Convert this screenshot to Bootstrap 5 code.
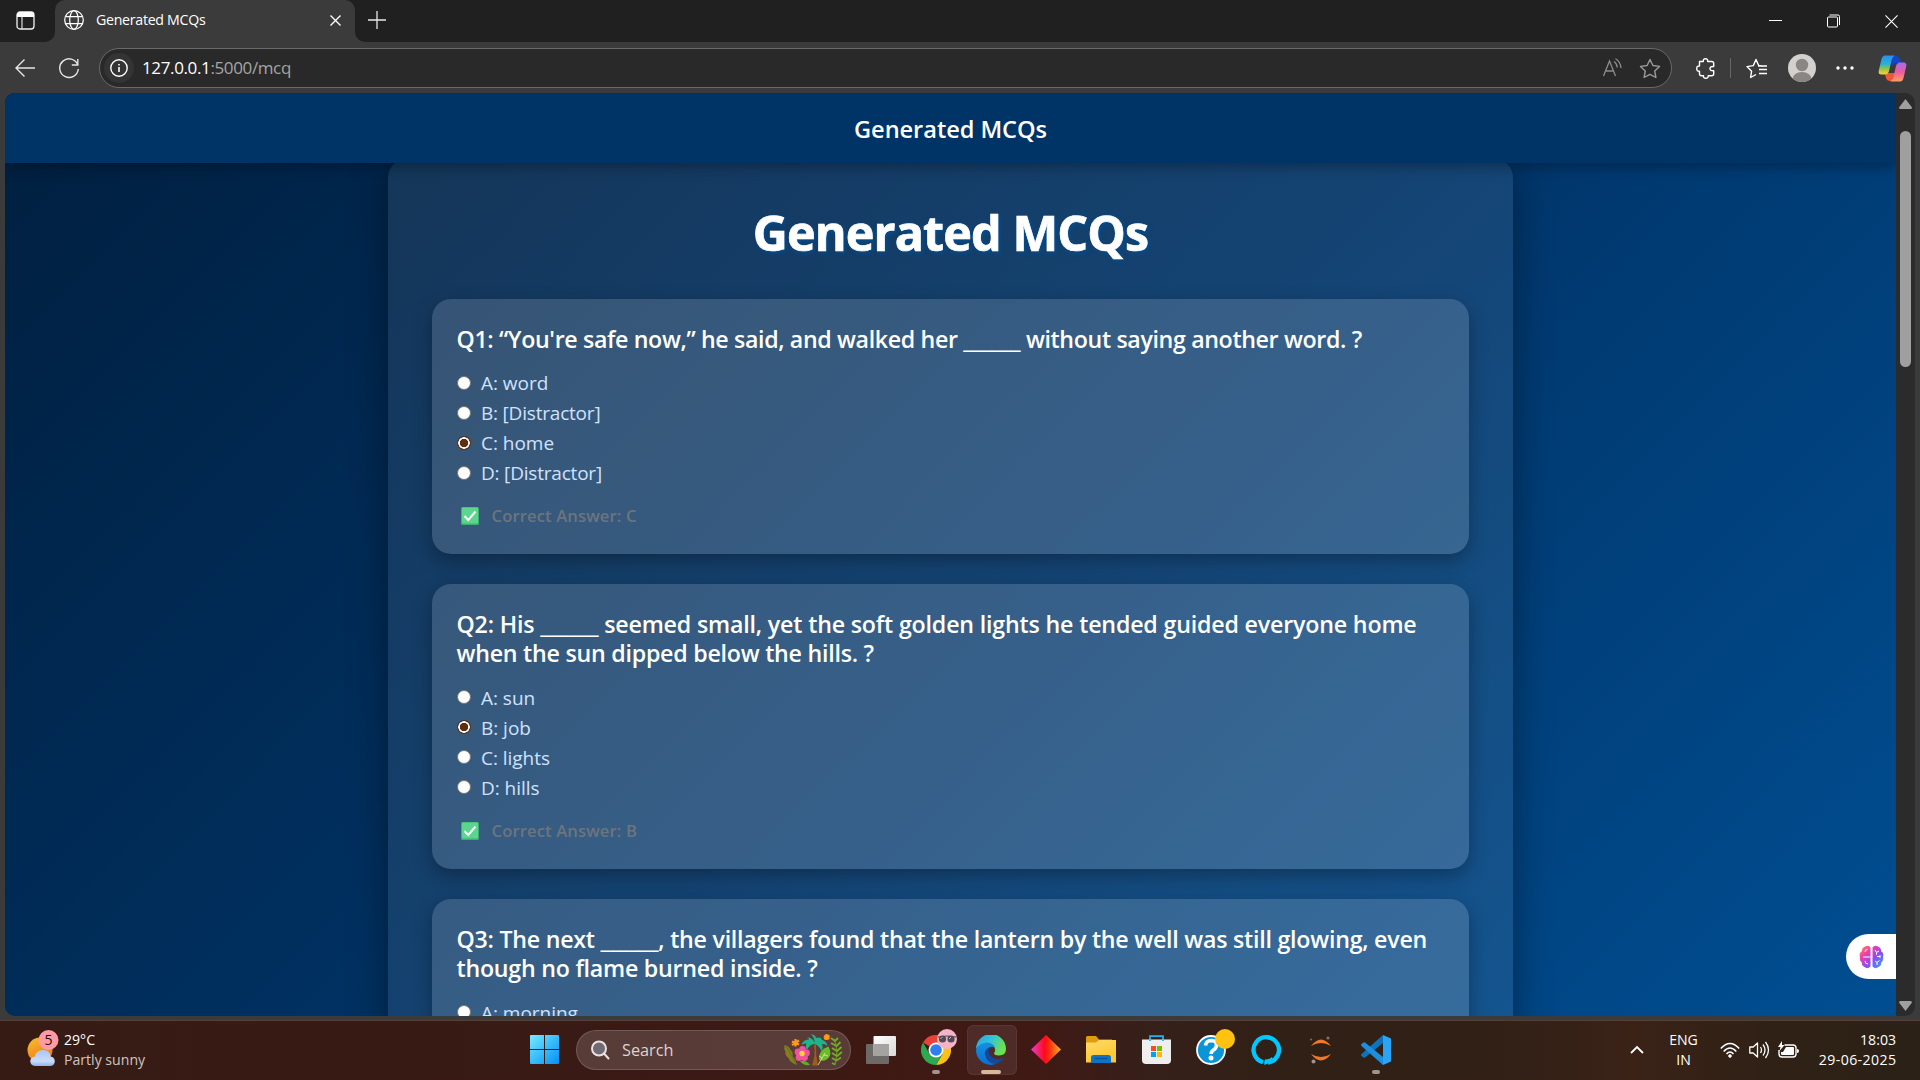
<!DOCTYPE html>
<html lang="en">
<head>
<meta charset="utf-8">
<meta name="viewport" content="width=device-width, initial-scale=1">
<title>Generated MCQs</title>
<link href="https://cdn.jsdelivr.net/npm/bootstrap@5.3.0/dist/css/bootstrap.min.css" rel="stylesheet">
<style>
html,body{height:100%;overflow:hidden}
body{font-family:"Open Sans","Noto Sans",sans-serif;background:#3b3b3b;color:#fff;width:1920px;height:1080px}
svg{display:block;flex:none}
.ln{white-space:nowrap;display:inline-block}
/* tab strip */
.tabstrip{height:42px;background:#202020}
.strip-left,.strip-rest{background:#3b3b3b}
.ws-btn{width:55px;height:42px;padding:0 0 2px 15.5px;background:#202020;border-bottom-right-radius:10px}
.tab-active{width:300px;height:42px;background:#3b3b3b;border-radius:10px 10px 0 0;padding:0 14px 2px 9px}
.strip-rest-in{height:42px;background:#202020;border-bottom-left-radius:10px;padding:0 22px 2px 13px}
.win-btns{gap:45px;padding-top:2px}
.t-tab{font-size:14.2px;line-height:20px;letter-spacing:-.29px}
.toolbar{height:51px;padding:6px 13px 5px 15px}
.omnibox{width:1573px;height:40px;border:1px solid #6a6a6a;border-radius:20px;background:#292929;margin-left:20px;padding:0 10px 0 4px}
.info-dot{width:30px;height:30px;border-radius:50%;background:#343434}
.vline{width:1px;height:20px;background:#666;margin:0 15px}
.t-url{font-size:17px;line-height:24px;letter-spacing:-.37px}
.t-url span{color:#a5a5a5}
/* page */
.viewport{height:923px;margin:0 5px;border-radius:10px;overflow:hidden;background:#2b2b2b}
.page{width:1891px;height:923px;background:linear-gradient(135deg,#001f3f,#003366,#004e92);overflow:hidden}
.topnav{height:70px;background:#003366;box-shadow:0 4px 12px rgba(0,0,0,.3);z-index:2;padding:2px 0 0}
.t-brand{font-size:23.6px;font-weight:600;line-height:32px;letter-spacing:-.05px}
.quiz{width:1125px;margin-top:-5px;padding:0 44px;border-radius:20px;background:rgba(255,255,255,.08);box-shadow:0 10px 38px rgba(0,0,0,.4)}
.t-title{font-size:48.5px;font-weight:700;line-height:60px;padding-top:44px;margin:0 0 37px;letter-spacing:-.9px;text-shadow:2px 2px 4px #004e92;-webkit-text-stroke:.7px #fff}
.q-card{background:rgba(255,255,255,.145);border:0;border-radius:19px;color:#fff;padding:26px 24.500px 0;margin-bottom:30px;box-shadow:0 7px 19px rgba(0,0,0,.3)}
.q-one{height:255px}.q-two{height:285px}
.t-q{font-size:23.2px;font-weight:600;line-height:29.4px;margin:0 0 14px;letter-spacing:-.235px}
.snug{letter-spacing:-.353px}.wide{letter-spacing:-.17px}
.t-opt{font-size:19px;line-height:30px;color:#cfe2ff;padding-left:10px;letter-spacing:-.03px}
.t-opt.tight{letter-spacing:-.2px}
.opt{height:30px}
.opt .form-check-input{width:14px;height:14px;margin:-1px 0 0 .5px;border:1px solid #767676;background:#fff;box-shadow:none;flex:none}
.opt .form-check-input:checked{border:1px solid #5f3010;background:radial-gradient(circle,#5c2e12 0 3.9px,#fff 4.5px 5.6px,#5c2e12 6.1px)}
.t-ans{font-size:16.6px;font-weight:600;line-height:24px;color:#6c757d;padding-left:13px;letter-spacing:.13px}
.ans{height:24px;margin-top:16px;padding-left:4px}
.scroller{width:19px;height:923px;padding:6px 0 5px}
.thumb{width:11px;height:236px;border-radius:6px;background:#9f9f9f;margin-top:22px}
.brain{right:0;top:841px;width:50px;height:45px;background:#fff;border-radius:23px 0 0 23px;padding-left:13px}
/* taskbar */
.frame-foot{height:4px;background:#3b3b3b}
.taskbar{height:60px;padding-bottom:2px;background:linear-gradient(90deg,#361b14 0,#391a14 28%,#3e1914 45%,#401914 54%,#36201a 60%,#302016 68%,#322016 78%,#3a2217 85%,#302116 92%,#2b2116 100%);border-top:1px solid #554039}
.weather{width:503px;padding-left:26px}
.t-sm{font-size:14.1px;line-height:20px}
.t-date{letter-spacing:.4px;margin-right:-.4px}
.dim{color:#cfc5c2}
.startslot{width:55px;margin-left:14px}
.search{width:275px;height:40px;border-radius:20px;background:rgba(255,255,255,.15);border:1px solid rgba(255,255,255,.16);margin:0 2.5px 0 4px;padding:0 7px 0 13px}
.t-search{font-size:16.3px;line-height:24px;color:#ddd3d0;margin-left:12px}
.slot{width:55px;height:57px;position:relative}
.slot.on::before{content:"";position:absolute;inset:4px 2px 3px 3px;border-radius:6px;background:rgba(255,255,255,.08);border:1px solid rgba(255,255,255,.06)}
.slot svg{position:relative}
.pip{position:absolute;top:49px;left:23.5px;width:8px;height:4px;border-radius:2px;background:#a0948f}
.on .pip{left:17.5px;width:20px;background:#d9b999}
.note{position:absolute;left:31px;top:8px;width:20px;height:20px;border-radius:50%;background:#ffc20e}
.note.pink{background:#f3b3c8;left:28px}
.tray{margin-left:auto;padding-right:24px}
.lang{margin:0 22px 0 25px}
</style>
</head>
<body>
<div class="d-flex flex-column h-100">

<header class="tabstrip d-flex">
  <div class="strip-left"><div class="ws-btn d-flex align-items-center">
    <svg width="19" height="19" viewBox="0 0 19 19"><rect x="1" y="1" width="17" height="17" rx="3" fill="none" stroke="#f2f2f2" stroke-width="1.3"/><path d="M1 6V3.5Q1 1 3.5 1H15.500Q18 1 18 3.500V6z" fill="#fff"/><path d="M6 6v12" stroke="#ddd" stroke-width="1.2"/></svg>
  </div></div>
  <div class="tab-active d-flex align-items-center">
    <svg width="20" height="20" viewBox="0 0 20 20" fill="none" stroke="#fff" stroke-width="1.25"><circle cx="10" cy="10" r="9.300"/><ellipse cx="10" cy="10" rx="4.300" ry="9.300"/><path d="M1.500 6.500h17M1.500 13.500h17"/></svg>
    <span class="ln t-tab ms-2 ps-1">Generated MCQs</span>
    <svg class="ms-auto" width="11" height="11" viewBox="0 0 11 11"><path d="M.5.5l10 10M10.500.5l-10 10" stroke="#fff" stroke-width="1.4"/></svg>
  </div>
  <div class="strip-rest flex-grow-1"><div class="strip-rest-in d-flex align-items-center">
    <svg width="18" height="18" viewBox="0 0 18 18"><path d="M9 0v18M0 9h18" stroke="#e8e8e8" stroke-width="1.3"/></svg>
    <div class="win-btns d-flex ms-auto align-items-center">
      <svg width="13" height="14" viewBox="0 0 13 14"><path d="M0 6.500h13" stroke="#fff"/></svg>
      <svg width="13" height="14" viewBox="0 0 13 14" fill="none" stroke="#fff"><rect x=".5" y="3" width="10" height="10" rx="1"/><path d="M2.500 1H11q1.500 0 1.500 1.500V11"/></svg>
      <svg width="13" height="13" viewBox="0 0 14 14"><path d="M.5.5l13 13M13.500.5l-13 13" stroke="#fff" stroke-width="1.2"/></svg>
    </div>
  </div></div>
</header>

<div class="toolbar d-flex align-items-center">
  <svg width="20" height="18" viewBox="0 0 20 18" fill="none" stroke="#e6e6e6" stroke-width="1.4"><path d="M9.500.5L1 9l8.500 8.500M1 9h19"/></svg>
  <svg class="ms-4" width="20" height="21" viewBox="0 0 20 21" fill="none" stroke="#e6e6e6" stroke-width="1.4"><path d="M18.800 7A9.300 9.300 0 1 0 19.300 11"/><path d="M18.800 1v6h-6"/></svg>
  <div class="omnibox d-flex align-items-center flex-shrink-0">
    <div class="info-dot d-flex align-items-center justify-content-center"><svg width="18" height="18" viewBox="0 0 18 18" fill="none" stroke="#fff" stroke-width="1.4"><circle cx="9" cy="9" r="8.200"/><path d="M9 8v5M9 5v1.500" stroke-width="1.600"/></svg></div>
    <span class="ln t-url ms-2">127.0.0.1<span>:5000/mcq</span></span>
    <svg class="ms-auto me-3" width="21" height="20" viewBox="0 0 21 20" fill="none" stroke="#8c8c8c" stroke-width="1.300"><path d="M1.500 18L7.500 3l6 15M3.500 13h8M12 3.500q3 2 3.300 6M13.500.7q5 3 5.500 9.300"/></svg>
    <svg width="22" height="21" viewBox="0 0 22 21" fill="none" stroke="#9a9a9a" stroke-width="1.400" stroke-linejoin="round"><path d="M11 1.500l2.900 6 6.600.9-4.800 4.600 1.200 6.500L11 16.400l-5.900 3.100 1.200-6.500L1.500 8.400l6.600-.9z"/></svg>
  </div>
  <div class="d-flex align-items-center flex-grow-1 ps-4">
    <svg width="19" height="21" viewBox="0 0 19 21" fill="none" stroke="#fff" stroke-width="1.400" stroke-linejoin="round"><path d="M3.500 3.500h3.800q-.3-2.800 2.200-2.800t2.200 2.800h4q2 0 2 2v3q-3.700-.3-3.700 2.100t3.700 2.100v3q0 2-2 2h-3.500q.3 2.600-2.400 2.600t-2.300-2.600H5.500q-2 0-2-2v-2.500q-2.800.2-2.800-2.600t2.800-2.600z"/></svg>
    <div class="vline"></div>
    <svg width="21" height="21" viewBox="0 0 21 21" fill="none" stroke="#fff" stroke-width="1.400" stroke-linejoin="round"><path d="M10 16.500L4.600 19.500l1-6.300L1 8.600l6.300-1L10 1.500l2.700 6 4.300.8M13 11.500h8M13 15.500h8M12 8h9"/></svg>
    <svg class="ms-auto" width="28" height="28" viewBox="0 0 28 28"><defs><clipPath id="av"><circle cx="14" cy="14" r="14"/></clipPath></defs><circle cx="14" cy="14" r="14" fill="#d3d1ce"/><g clip-path="url(#av)" fill="#8a8683"><circle cx="14" cy="11" r="6.200"/><ellipse cx="14" cy="25" rx="9.500" ry="7"/></g></svg>
    <svg class="ms-auto" width="18" height="4" viewBox="0 0 18 4" fill="#fff"><circle cx="2" cy="2" r="1.700"/><circle cx="9" cy="2" r="1.700"/><circle cx="16" cy="2" r="1.700"/></svg>
    <svg class="ms-4" width="29" height="27" viewBox="0 0 29 27"><defs><linearGradient id="c1" x2="0" y2="1"><stop stop-color="#2b8df0"/><stop offset=".45" stop-color="#27b3d0"/><stop offset=".75" stop-color="#a5c63b"/><stop offset="1" stop-color="#ffd02b"/></linearGradient><linearGradient id="c2" x2="0" y2="1"><stop stop-color="#a26bf0"/><stop offset=".5" stop-color="#ee5b9c"/><stop offset="1" stop-color="#ffa15c"/></linearGradient></defs><path d="M14 1h4q3 0 4 3l1 4h-5q-3 0-4 4z" fill="#1743c4"/><path d="M7 19l3-1h7l-3 8h-2q-3 0-4-3z" fill="#f1553a"/><path d="M7 .5h10q-2.500 1-3.500 5L11 16q-1 3.500-4 3.500H3.500Q0 19.500.7 16L3.500 4Q4.500.5 7 .5z" fill="url(#c1)"/><path d="M22 26.500H12q2.500-1 3.500-5L18 11q1-3.500 4-3.500h3.500q3.500 0 2.800 3.500L25.500 23q-1 3.500-3.500 3.500z" fill="url(#c2)"/></svg>
  </div>
</div>

<main class="viewport d-flex">
  <div class="page d-flex flex-column align-items-center position-relative">
    <nav class="topnav navbar w-100 justify-content-center flex-shrink-0"><span class="ln t-brand">Generated MCQs</span></nav>
    <section class="quiz flex-shrink-0">
      <h1 class="t-title text-center">Generated MCQs</h1>

      <div class="card q-card q-one">
        <h5 class="t-q"><span class="ln snug">Q1: “You're safe now,” he said, and walked her ______ without saying another word. ?</span></h5>
        <label class="opt d-flex align-items-center"><input class="form-check-input" type="radio" name="q1"><span class="ln t-opt">A: word</span></label>
        <label class="opt d-flex align-items-center"><input class="form-check-input" type="radio" name="q1"><span class="ln t-opt tight">B: [Distractor]</span></label>
        <label class="opt d-flex align-items-center"><input class="form-check-input" type="radio" name="q1" checked><span class="ln t-opt">C: home</span></label>
        <label class="opt d-flex align-items-center"><input class="form-check-input" type="radio" name="q1"><span class="ln t-opt tight">D: [Distractor]</span></label>
        <div class="ans d-flex align-items-center"><svg width="18" height="18" viewBox="0 0 18 18"><rect width="18" height="18" rx="1.500" fill="#3fae70"/><rect x="1" y=".5" width="16" height="16" rx="1" fill="#5ad68d"/><path d="M3.500 9l3.800 4 7.200-8.500" fill="none" stroke="#fff" stroke-width="2"/></svg><span class="ln t-ans">Correct Answer: C</span></div>
      </div>

      <div class="card q-card q-two">
        <h5 class="t-q"><span class="ln wide">Q2: His ______ seemed small, yet the soft golden lights he tended guided everyone home</span><br><span class="ln">when the sun dipped below the hills. ?</span></h5>
        <label class="opt d-flex align-items-center"><input class="form-check-input" type="radio" name="q2"><span class="ln t-opt">A: sun</span></label>
        <label class="opt d-flex align-items-center"><input class="form-check-input" type="radio" name="q2" checked><span class="ln t-opt">B: job</span></label>
        <label class="opt d-flex align-items-center"><input class="form-check-input" type="radio" name="q2"><span class="ln t-opt">C: lights</span></label>
        <label class="opt d-flex align-items-center"><input class="form-check-input" type="radio" name="q2"><span class="ln t-opt">D: hills</span></label>
        <div class="ans d-flex align-items-center"><svg width="18" height="18" viewBox="0 0 18 18"><rect width="18" height="18" rx="1.500" fill="#3fae70"/><rect x="1" y=".5" width="16" height="16" rx="1" fill="#5ad68d"/><path d="M3.500 9l3.800 4 7.200-8.500" fill="none" stroke="#fff" stroke-width="2"/></svg><span class="ln t-ans">Correct Answer: B</span></div>
      </div>

      <div class="card q-card q-two">
        <h5 class="t-q"><span class="ln">Q3: The next ______, the villagers found that the lantern by the well was still glowing, even</span><br><span class="ln">though no flame burned inside. ?</span></h5>
        <label class="opt d-flex align-items-center"><input class="form-check-input" type="radio" name="q3"><span class="ln t-opt">A: morning</span></label>
      </div>
    </section>
    <div class="brain position-absolute d-flex align-items-center">
      <svg width="25" height="24" viewBox="0 0 25 24"><defs><linearGradient id="br" x2="1" y2="1"><stop stop-color="#ff9a2e"/><stop offset=".3" stop-color="#ee3fae"/><stop offset=".6" stop-color="#8a4df0"/><stop offset="1" stop-color="#1fb0ff"/></linearGradient></defs><path d="M11.500 2.500v19q-3 3-6 .5-3-1-2.700-4.500Q0 15 1 12-.3 8 2.800 6.300 3 2.500 6 1.500q3.500-2 5.500 1zM13.500 2.500v19q3 3 6 .5 3-1 2.700-4.500Q25 15 24 12q1.300-4-1.800-5.700Q22 2.500 19 1.500q-3.500-2-5.500 1z" fill="url(#br)"/><path d="M6 7q0-2.500 2.500-2.500M4 12h7.500M6 16q0 3 3 3M16 5l1.500 2.500L20 6M17.500 7.500v2.300M18 11.500h3M21 10v3M16 16l2 1.500 2.500-2M18 17.500V20" fill="none" stroke="#fff" stroke-width="1"/></svg>
    </div>
  </div>
  <div class="scroller d-flex flex-column align-items-center">
    <svg width="13" height="10" viewBox="0 0 13 10"><path d="M6.500 0L13 8.500Q13 10 11.500 10h-10Q0 10 0 8.500z" fill="#9f9f9f"/></svg>
    <div class="thumb"></div>
    <svg class="mt-auto" width="13" height="10" viewBox="0 0 13 10"><path d="M6.500 10L13 1.500Q13 0 11.500 0h-10Q0 0 0 1.500z" fill="#9f9f9f"/></svg>
  </div>
</main>
<div class="frame-foot"></div>

<footer class="taskbar d-flex align-items-center">
  <div class="weather d-flex align-items-center">
    <svg width="34" height="44" viewBox="0 0 34 44"><defs><linearGradient id="sn" x2=".5" y2="1"><stop stop-color="#f5c132"/><stop offset="1" stop-color="#f07b12"/></linearGradient><linearGradient id="cl" x2="0" y2="1"><stop stop-color="#a9c6f5"/><stop offset=".7" stop-color="#c9dcfa"/><stop offset="1" stop-color="#8fb1ee"/></linearGradient></defs><circle cx="14" cy="22" r="12.500" fill="url(#sn)"/><path d="M9 38a5.500 4.800 0 0 1 0-9.500q1-6.500 8-6.500t7.500 6.500a5 4.800 0 0 1 0 9.500z" fill="url(#cl)"/><circle cx="22.500" cy="12" r="10" fill="#ff9aa5"/><text x="22.500" y="17" text-anchor="middle" font-size="14" font-family="Open Sans" fill="#1a1010">5</text></svg>
    <div class="d-flex flex-column align-items-start ms-1"><span class="ln t-sm">29°C</span><span class="ln t-sm dim">Partly sunny</span></div>
  </div>
  <div class="startslot d-flex justify-content-center"><svg width="29" height="29" viewBox="0 0 29 29"><defs><linearGradient id="st" gradientUnits="userSpaceOnUse" x1="0" y1="0" x2="29" y2="29"><stop stop-color="#7aeaff"/><stop offset=".5" stop-color="#38bdfb"/><stop offset="1" stop-color="#0a8df5"/></linearGradient></defs><path d="M0 1q0-1 1-1h13v14H0zM15 0h13q1 0 1 1v13H15zM0 15h14v14H1q-1 0-1-1zM15 15h14v13q0 1-1 1H15z" fill="url(#st)"/></svg></div>
  <div class="search d-flex align-items-center">
    <svg width="20" height="20" viewBox="0 0 20 20" fill="none" stroke="#e9e2e0" stroke-width="2"><circle cx="9" cy="8.500" r="7" fill="#6f6b72"/><path d="M14 13.500l4.500 5" stroke-linecap="round"/></svg>
    <span class="ln t-search">Search</span>
    <svg class="ms-auto" width="60" height="34" viewBox="0 0 60 34"><path d="M31 12q2 9-2 20.500h6Q32.500 22 33 12z" fill="#a25b1c"/><path d="M32 10q-3-6-8-5.500 2 .5 2 2-6 0-7.500 5.500 2.500-2 5-1.500-1.500 3 .5 6.500 2-5 7-6 5 1 7.500 7 2-3 .5-7 3-.5 5.500 2-1-5-5.500-6-1-3.500-6-2 0-3-5-4 3 3 4 9z" fill="#1fb58c"/><path d="M1.500 12q5 1 6 5 3 2 2 6 4 4 4 9-7-3-8-7-4-3-3-6-2-3-1-7z" fill="#8a7a22"/><path d="M3 13q5 8 10 18" stroke="#4f7a1e" fill="none"/><path d="M51 6q5 10 1 26" stroke="#5a8f20" stroke-width="1.300" fill="none"/><path d="M48 5l4 3 3-3M48 10l5.500 3 4-4M49 15l5 3 4.500-4M49 20l5 3 5-4M49 25l4.500 2.500 4.500-3M49 30l3 1.500" stroke="#74a92b" stroke-width="1.900" fill="none"/><path d="M45.500 13.500q4 8-.5 12t-9 1q-.5-10 9.500-13z" fill="#6cbb2e"/><path d="M35 32l7-12M39 25l-3-2M41 22l4 1" stroke="#e6f0a0" stroke-width=".8"/><path d="M17 28q6-1 10 4-7 1-10-4z" fill="#5fae2b"/><g fill="#f0529c"><circle cx="19.500" cy="16.500" r="3.400"/><circle cx="23.500" cy="20" r="3.400"/><circle cx="21.500" cy="24.500" r="3.400"/><circle cx="16" cy="24.500" r="3.400"/><circle cx="15" cy="19" r="3.400"/></g><circle cx="19" cy="20.500" r="2.700" fill="#ffd23c"/><g fill="none" stroke="#ff9a1f" stroke-width="2.200"><path d="M12.500 6v7.500M9 8.500l7 3M9 12l7-4.500M43.500 1v6M41 3l5.500 2.800M41 5.800L46.500 2.500"/></g></svg>
  </div>
  <div class="slot d-flex align-items-center justify-content-center"><svg width="30" height="28" viewBox="0 0 30 28"><defs><linearGradient id="tv" x2="1" y2="1"><stop stop-color="#fff"/><stop offset="1" stop-color="#d8d8d8"/></linearGradient></defs><rect x="0" y="8" width="23" height="20" rx="1" fill="#6c6967"/><rect x="7.500" y="0" width="22.500" height="20" rx="1" fill="url(#tv)"/><path d="M7.500 8H23v12H7.500z" fill="#a5a3a2"/></svg></div>
  <div class="slot d-flex align-items-center justify-content-center"><svg width="30" height="30" viewBox="0 0 30 30"><path d="M15 15L2 7.500A15 15 0 0 1 28 7.500H15z" fill="#ea4335"/><path d="M15 7.500h13A15 15 0 0 1 15 30l6.500-11z" fill="#fbc116"/><path d="M2 7.500L8.500 18.700 15 22.500l6.500-3.800L15 30A15 15 0 0 1 2 7.500z" fill="#2da94f"/><circle cx="15" cy="15" r="7.500" fill="#fff"/><circle cx="15" cy="15" r="5.800" fill="#2f7df0"/></svg><div class="note pink"><svg width="20" height="20" viewBox="0 0 20 20"><path d="M1 8q9-2 18 0" stroke="#4a4550" fill="none"/><circle cx="5.500" cy="10" r="3.600" fill="#4f4a55"/><circle cx="14" cy="10" r="3.600" fill="#4f4a55"/><path d="M3.500 10l2-2M12 10l2-2" stroke="#bbb"/></svg></div><i class="pip"></i></div>
  <div class="slot on d-flex align-items-center justify-content-center"><svg width="30" height="30" viewBox="0 0 30 30"><defs><linearGradient id="e1" x2="1" y2=".4"><stop stop-color="#2b9fe6"/><stop offset=".5" stop-color="#2fc3dd"/><stop offset="1" stop-color="#6fe04c"/></linearGradient><linearGradient id="e2" x2="0" y2="1"><stop stop-color="#1390e0"/><stop offset="1" stop-color="#0b6fd0"/></linearGradient></defs><path d="M0 14A15 15 0 0 1 30 14q0 6.500-7 6.500-5 0-5-2.500 1.500-1.500 1-4Q18 9 12 9 4 9 0 14z" fill="url(#e1)"/><path d="M0 15Q3 8 10.500 7.500q7 0 8.500 5.500-3-2-6-.5-4 3-1.500 9T23 27q-4 3-8 3A15 15 0 0 1 0 15z" fill="url(#e2)"/><path d="M13 12.500Q8 15 9 20q2 8 10 9 6-1.500 9-6.500-6 3-11 .5-5.500-3.500-4-10.500z" fill="#114a9c"/></svg><i class="pip"></i></div>
  <div class="slot d-flex align-items-center justify-content-center"><svg width="30" height="30" viewBox="0 0 30 30"><defs><linearGradient id="dm"><stop stop-color="#e83fd0"/><stop offset=".45" stop-color="#ff0a1a"/><stop offset=".6" stop-color="#ff2a10"/><stop offset="1" stop-color="#ffb01e"/></linearGradient></defs><path d="M15 0l15 14.500L15 29 0 14.500z" fill="url(#dm)"/></svg></div>
  <div class="slot d-flex align-items-center justify-content-center"><svg width="30" height="27" viewBox="0 0 30 27"><defs><linearGradient id="fo" x2=".5" y2="1"><stop stop-color="#ffdb6b"/><stop offset="1" stop-color="#fcc62c"/></linearGradient></defs><path d="M0 1.500Q0 0 1.500 0H10l3 3.500h13V9H0z" fill="#dd9d0c"/><path d="M0 6.500h10L13 4h17v22.500H0z" fill="url(#fo)"/><path d="M5 27v-5.500q0-2.500 2.500-2.500h15q2.500 0 2.500 2.500V27z" fill="#0e72c9"/><path d="M8.500 22.500h13" stroke="#07518f" stroke-width="1.200"/></svg></div>
  <div class="slot d-flex align-items-center justify-content-center"><svg width="29" height="29" viewBox="0 0 29 29"><path d="M8 6V1.200h13V6" fill="none" stroke="#27b1ec" stroke-width="1.800"/><path d="M0 4.500h29V25q0 4-4 4H4q-4 0-4-4z" fill="#eee"/><path d="M8 4.500V6M21 4.500V6" stroke="#27b1ec" stroke-width="1.800"/><path d="M9 11h5v5H9z" fill="#f25022"/><path d="M15 11h5v5h-5z" fill="#7fba00"/><path d="M9 17h5v5H9z" fill="#00a4ef"/><path d="M15 17h5v5h-5z" fill="#ffb900"/></svg></div>
  <div class="slot d-flex align-items-center justify-content-center"><svg width="30" height="30" viewBox="0 0 30 30"><circle cx="15" cy="15" r="14" fill="#0a96d6" stroke="#fff" stroke-width="1.800"/><path d="M9.500 10.500Q10 5.500 15.500 5.500q5 .3 5 4.500 0 3-3 5-2.300 1.500-2.300 4" fill="none" stroke="#fff" stroke-width="3.600"/><circle cx="15" cy="23" r="2.500" fill="#fff"/></svg><div class="note"></div></div>
  <div class="slot d-flex align-items-center justify-content-center"><svg width="30" height="30" viewBox="0 0 30 30"><path d="M12 27.200A12.700 12.700 0 1 1 17 27.500" fill="none" stroke="#00c8ff" stroke-width="4.300"/><path d="M14 24.500q5-.5 7-2.500l1 4-8.500 4q-.8-3 .5-5.500z" fill="#00c8ff"/></svg></div>
  <div class="slot d-flex align-items-center justify-content-center"><svg width="24" height="28" viewBox="0 0 24 28"><path d="M2 10Q12-3 22 10 12 4 2 10zM2 18q10 13 20 0-10 6-20 0z" fill="#f37726"/><circle cx="19" cy="2" r="1.600" fill="#77706c"/><circle cx="2" cy="3.500" r="1" fill="#77706c"/><circle cx="4.500" cy="25.500" r="2" fill="#9a9592"/></svg></div>
  <div class="slot d-flex align-items-center justify-content-center"><svg width="30" height="30" viewBox="0 0 30 30"><path d="M22 0l8 3.500v23L22 30z" fill="#2aa4f4"/><path d="M22 0v8L4 22.500Q3 23 2 22.300L.5 21q-1-1 0-2z" fill="#0b74be"/><path d="M22 30v-8L4 7.500Q3 7 2 7.700L.5 9q-1 1 0 2z" fill="#1b8fdd"/></svg><i class="pip"></i></div>

  <div class="tray d-flex align-items-center">
    <svg width="14" height="9" viewBox="0 0 14 9"><path d="M1 8l6-6 6 6" fill="none" stroke="#fff" stroke-width="1.800"/></svg>
    <div class="lang d-flex flex-column align-items-center"><span class="ln t-sm">ENG</span><span class="ln t-sm">IN</span></div>
    <div class="d-flex align-items-center me-3 pe-1">
      <svg width="20" height="16" viewBox="0 0 20 16" fill="none" stroke="#fff" stroke-width="1.500"><path d="M.8 6.500q9.200-10 18.400 0M3.700 9.500q6.300-7 12.600 0M6.500 12q3.500-4 7 0"/><circle cx="10" cy="14" r="1.300" fill="#fff" stroke-width="1"/></svg>
      <svg class="mx-2 px-0" width="22" height="18" viewBox="-1 0 22 18" fill="none" stroke="#fff" stroke-width="1.300"><path d="M.8 6h3.400L8.500 2v14l-4.300-4H.8z" stroke-linejoin="round"/><path d="M11.500 6q2 3 0 6M14 3.500q4 5.500 0 11M16.500 1q6 8 0 16"/></svg>
      <svg width="21" height="18" viewBox="0 0 21 18"><path d="M6.500 4H15q3 0 3 3v6q0 3-3 3H4q-3 0-3-3V9" fill="none" stroke="#fff" stroke-width="1.400"/><path d="M8 6h7q1 0 1 1v6q0 1-1 1H4q-1 0-1-1v-2h2z" fill="#fff"/><path d="M19 8q2 0 2 2t-2 2zM4 0L0 6h2.500L1.500 10 6.500 4H4z" fill="#fff"/></svg>
    </div>
    <div class="d-flex flex-column align-items-end"><span class="ln t-sm">18:03</span><span class="ln t-sm t-date">29-06-2025</span></div>
  </div>
</footer>
</div>
<script src="https://cdn.jsdelivr.net/npm/bootstrap@5.3.0/dist/js/bootstrap.bundle.min.js"></script>
</body>
</html>
